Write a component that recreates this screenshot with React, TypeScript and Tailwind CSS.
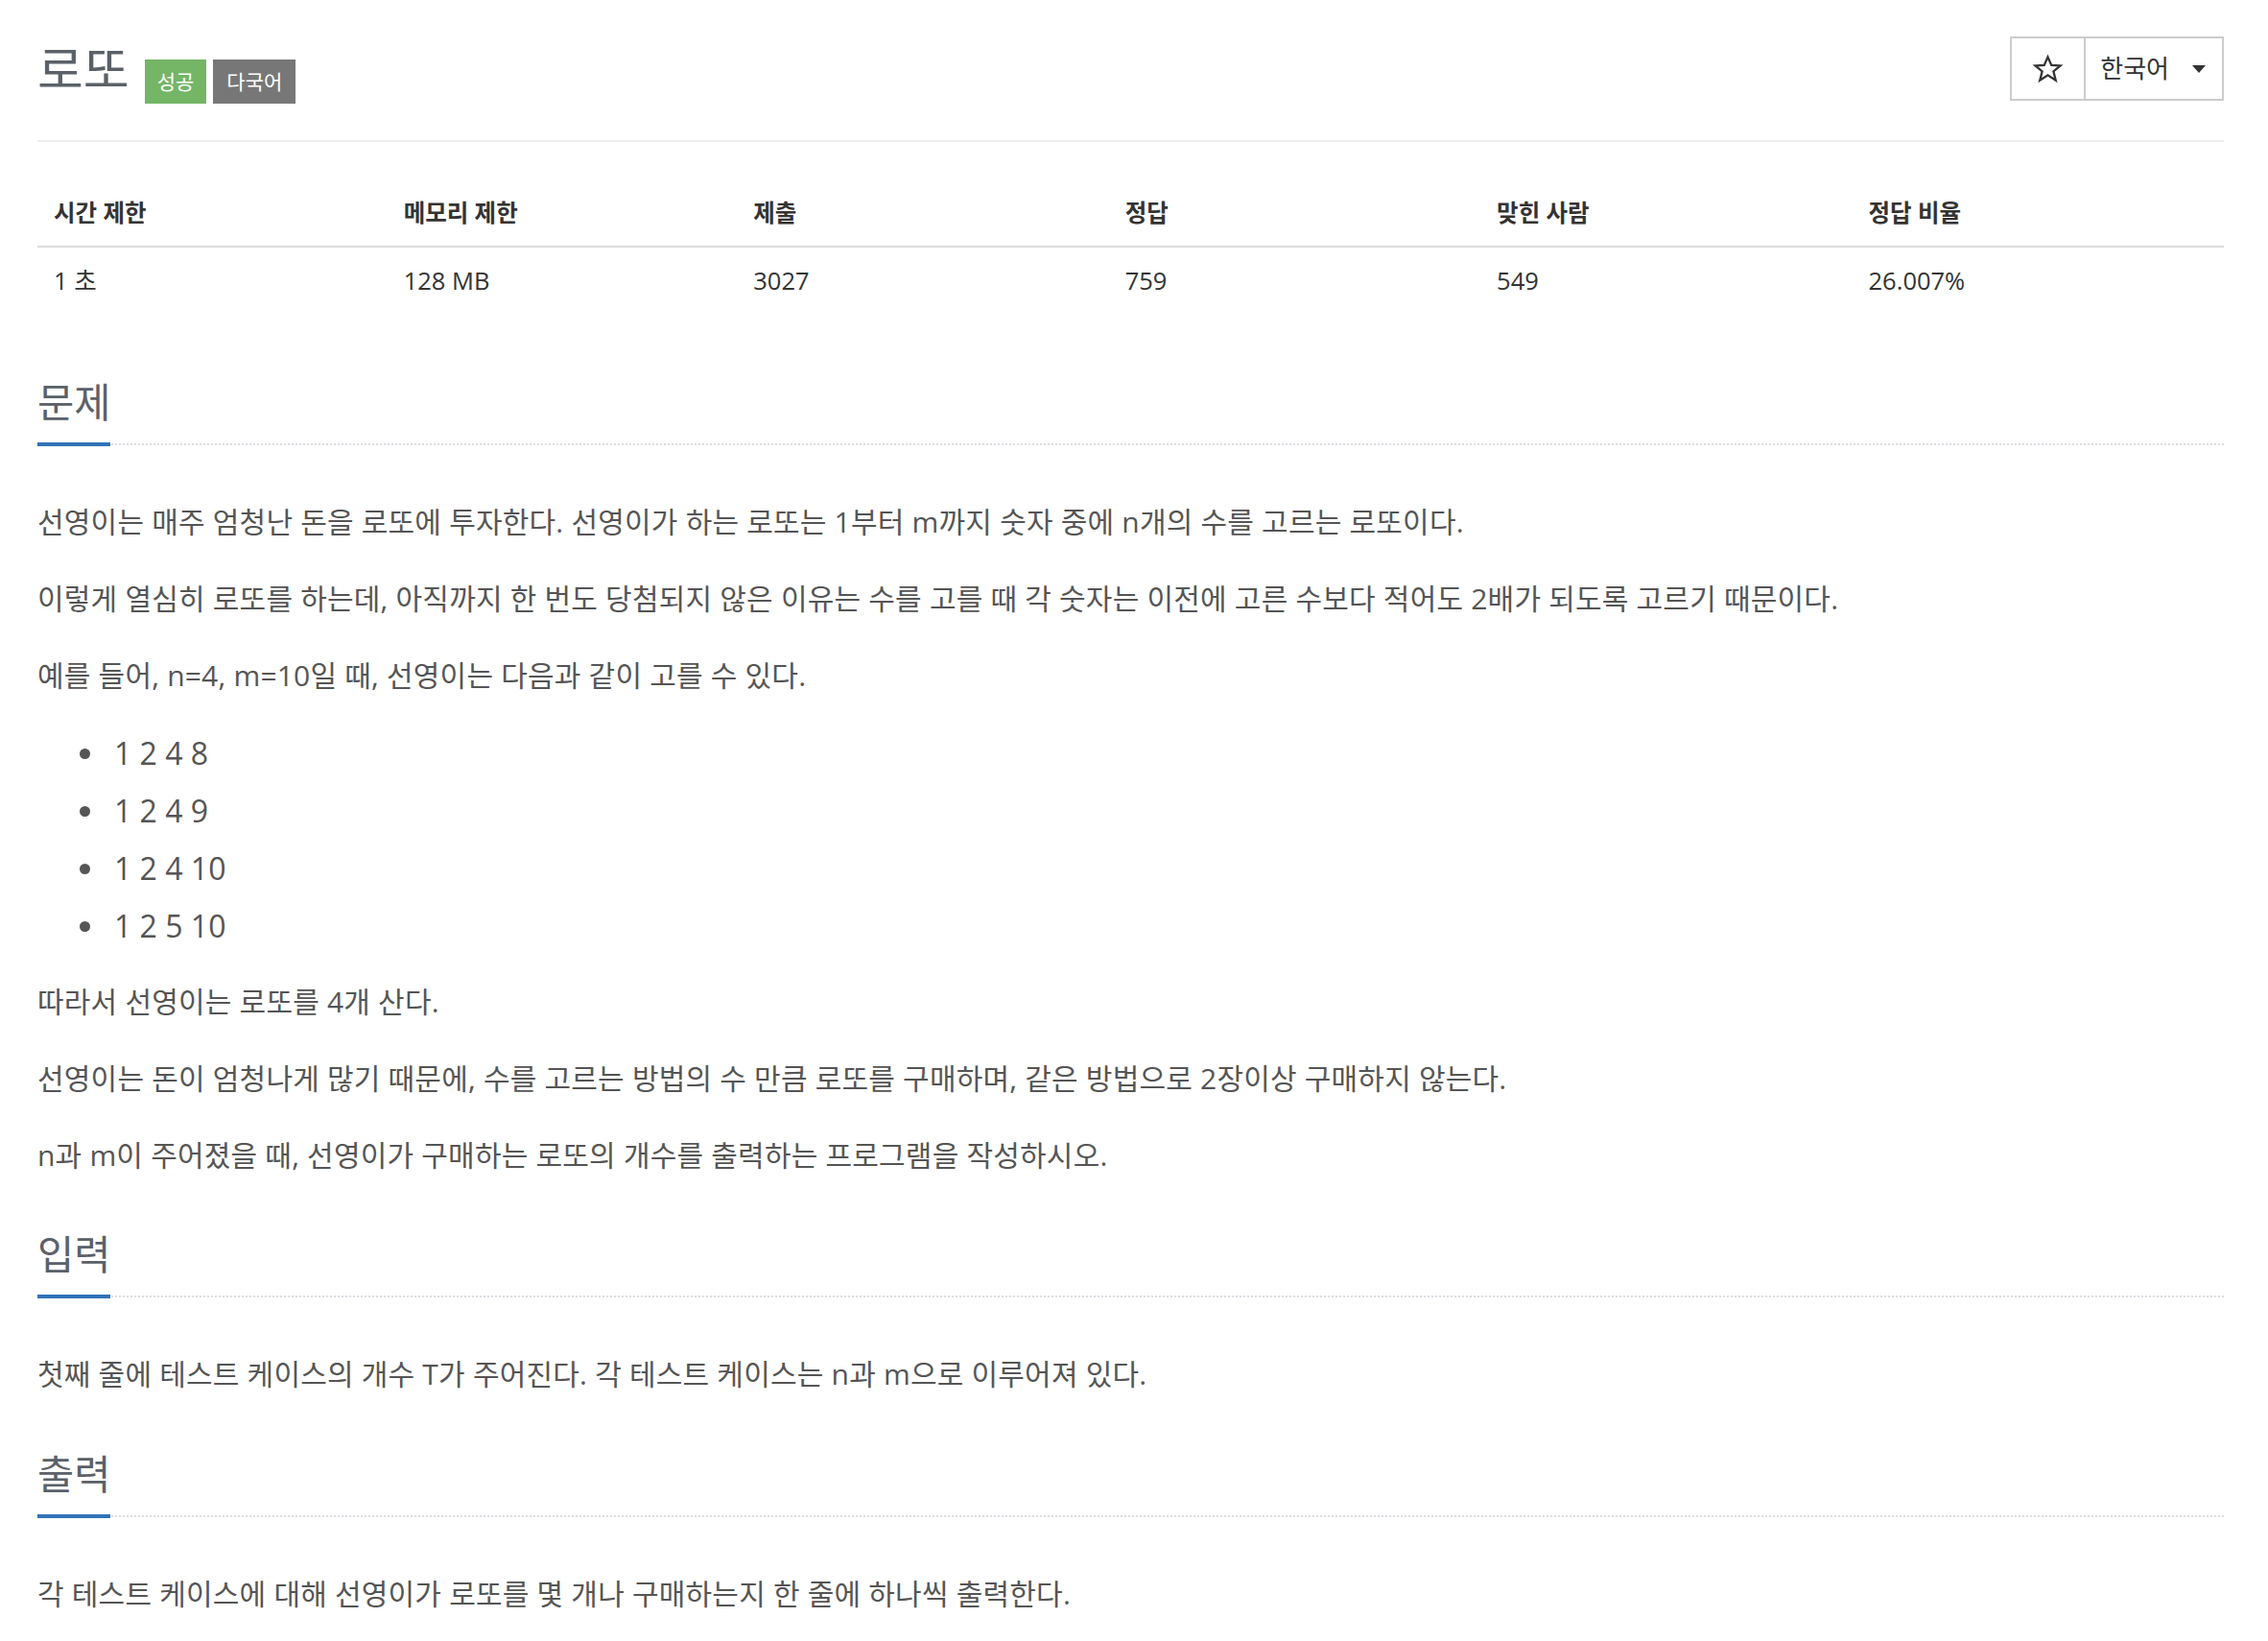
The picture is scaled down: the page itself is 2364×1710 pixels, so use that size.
import React from "react";

const FONT = { fontFamily: '"Open Sans", "Noto Sans CJK KR", sans-serif' };

const stats = [
  { label: "시간 제한", value: "1 초", w: "w-[16%]" },
  { label: "메모리 제한", value: "128 MB", w: "w-[16%]" },
  { label: "제출", value: "3027", w: "w-[17%]" },
  { label: "정답", value: "759", w: "w-[17%]" },
  { label: "맞힌 사람", value: "549", w: "w-[17%]" },
  { label: "정답 비율", value: "26.007%", w: "w-[17%]" },
];

function Headline({ title }: { title: string }) {
  return (
    <div className="border-b-2 border-dotted border-[#dddde3]">
      <h2 className="inline-block mb-[-3px] border-b-[4px] border-[#3173b8] pb-[19px] text-[41.5px] leading-[45px] font-normal text-[#5b6169]">
        {title}
      </h2>
    </div>
  );
}

function P({ children }: { children: React.ReactNode }) {
  return <p className="mb-[35px] text-[30px] leading-[45px] tracking-[0.2px] text-[#555555]">{children}</p>;
}

export default function App() {
  const picks = ["1 2 4 8", "1 2 4 9", "1 2 4 10", "1 2 5 10"];
  return (
    <div className="min-h-[1710px] bg-white" style={FONT}>
      <div className="ml-[39px] w-[2279px] flex flex-col">
        {/* title row */}
        <div className="flex items-start justify-between border-b-2 border-[#eeeeee] pt-[38px] pb-[38px]">
          <div className="mt-[4px] flex items-start">
            <h1 className="text-[52px] leading-[60px] font-normal text-[#5b6169]">로또</h1>
            <span className="ml-[16px] mt-[20px] h-[46px] bg-[#74b566] px-[13px] text-[21px] leading-[46px] text-white">성공</span>
            <span className="ml-[7px] mt-[20px] h-[46px] bg-[#777777] px-[14px] text-[21px] leading-[46px] text-white">다국어</span>
          </div>
          <div className="flex h-[67px] border-2 border-[#cccccc]">
            <button className="flex w-[77px] items-center justify-center border-r-2 border-[#cccccc]">
              <svg width="33" height="32" viewBox="0 0 24 24" fill="none" stroke="#333" strokeWidth="1.7" strokeLinejoin="miter">
                <polygon points="12,2.5 14.8,9 21.8,9.3 16.4,13.8 18.2,20.8 12,16.8 5.8,20.8 7.6,13.8 2.2,9.3 9.2,9" />
              </svg>
            </button>
            <button className="flex items-center pl-[15px] pr-[17px] text-[26px] text-[#333333]">
              <span>한국어</span>
              <span className="ml-[24px] h-0 w-0 border-x-[7.5px] border-t-[8px] border-x-transparent border-t-[#333333]" />
            </button>
          </div>
        </div>

        {/* stats table */}
        <table className="mt-[42px] w-full table-fixed border-collapse">
          <thead>
            <tr>
              {stats.map((s) => (
                <th key={s.label} className={`${s.w} border-b-2 border-[#dddddd] pl-[17px] pt-[17px] pb-[19px] text-left text-[24.5px] leading-[30px] font-bold text-[#333333]`}>
                  {s.label}
                </th>
              ))}
            </tr>
          </thead>
          <tbody>
            <tr>
              {stats.map((s) => (
                <td key={s.label} className="pl-[17px] pt-[19px] pb-[17px] text-[25.5px] leading-[30px] text-[#333333]">
                  {s.value}
                </td>
              ))}
            </tr>
          </tbody>
        </table>

        {/* 문제 */}
        <section className="mt-[73px] flex flex-col">
          <Headline title="문제" />
          <div className="mt-[57px] flex flex-col">
            <P>선영이는 매주 엄청난 돈을 로또에 투자한다. 선영이가 하는 로또는 1부터 m까지 숫자 중에 n개의 수를 고르는 로또이다.</P>
            <P>이렇게 열심히 로또를 하는데, 아직까지 한 번도 당첨되지 않은 이유는 수를 고를 때 각 숫자는 이전에 고른 수보다 적어도 2배가 되도록 고르기 때문이다.</P>
            <P>예를 들어, n=4, m=10일 때, 선영이는 다음과 같이 고를 수 있다.</P>
            <ul className="mt-[-6px] mb-[26px] flex flex-col pl-[44px]">
              {picks.map((p) => (
                <li key={p} className="flex items-center text-[32px] leading-[60px] text-[#555555]">
                  <span className="h-[11px] w-[11px] rounded-full bg-[#555555]" />
                  <span className="ml-[25px]">{p}</span>
                </li>
              ))}
            </ul>
            <P>따라서 선영이는 로또를 4개 산다.</P>
            <P>선영이는 돈이 엄청나게 많기 때문에, 수를 고르는 방법의 수 만큼 로또를 구매하며, 같은 방법으로 2장이상 구매하지 않는다.</P>
            <P>n과 m이 주어졌을 때, 선영이가 구매하는 로또의 개수를 출력하는 프로그램을 작성하시오.</P>
          </div>
        </section>

        {/* 입력 */}
        <section className="mt-[24px] flex flex-col">
          <Headline title="입력" />
          <div className="mt-[57px] flex flex-col">
            <P>첫째 줄에 테스트 케이스의 개수 T가 주어진다. 각 테스트 케이스는 n과 m으로 이루어져 있다.</P>
          </div>
        </section>

        {/* 출력 */}
        <section className="mt-[25px] flex flex-col">
          <Headline title="출력" />
          <div className="mt-[57px] flex flex-col">
            <P>각 테스트 케이스에 대해 선영이가 로또를 몇 개나 구매하는지 한 줄에 하나씩 출력한다.</P>
          </div>
        </section>
      </div>
    </div>
  );
}
